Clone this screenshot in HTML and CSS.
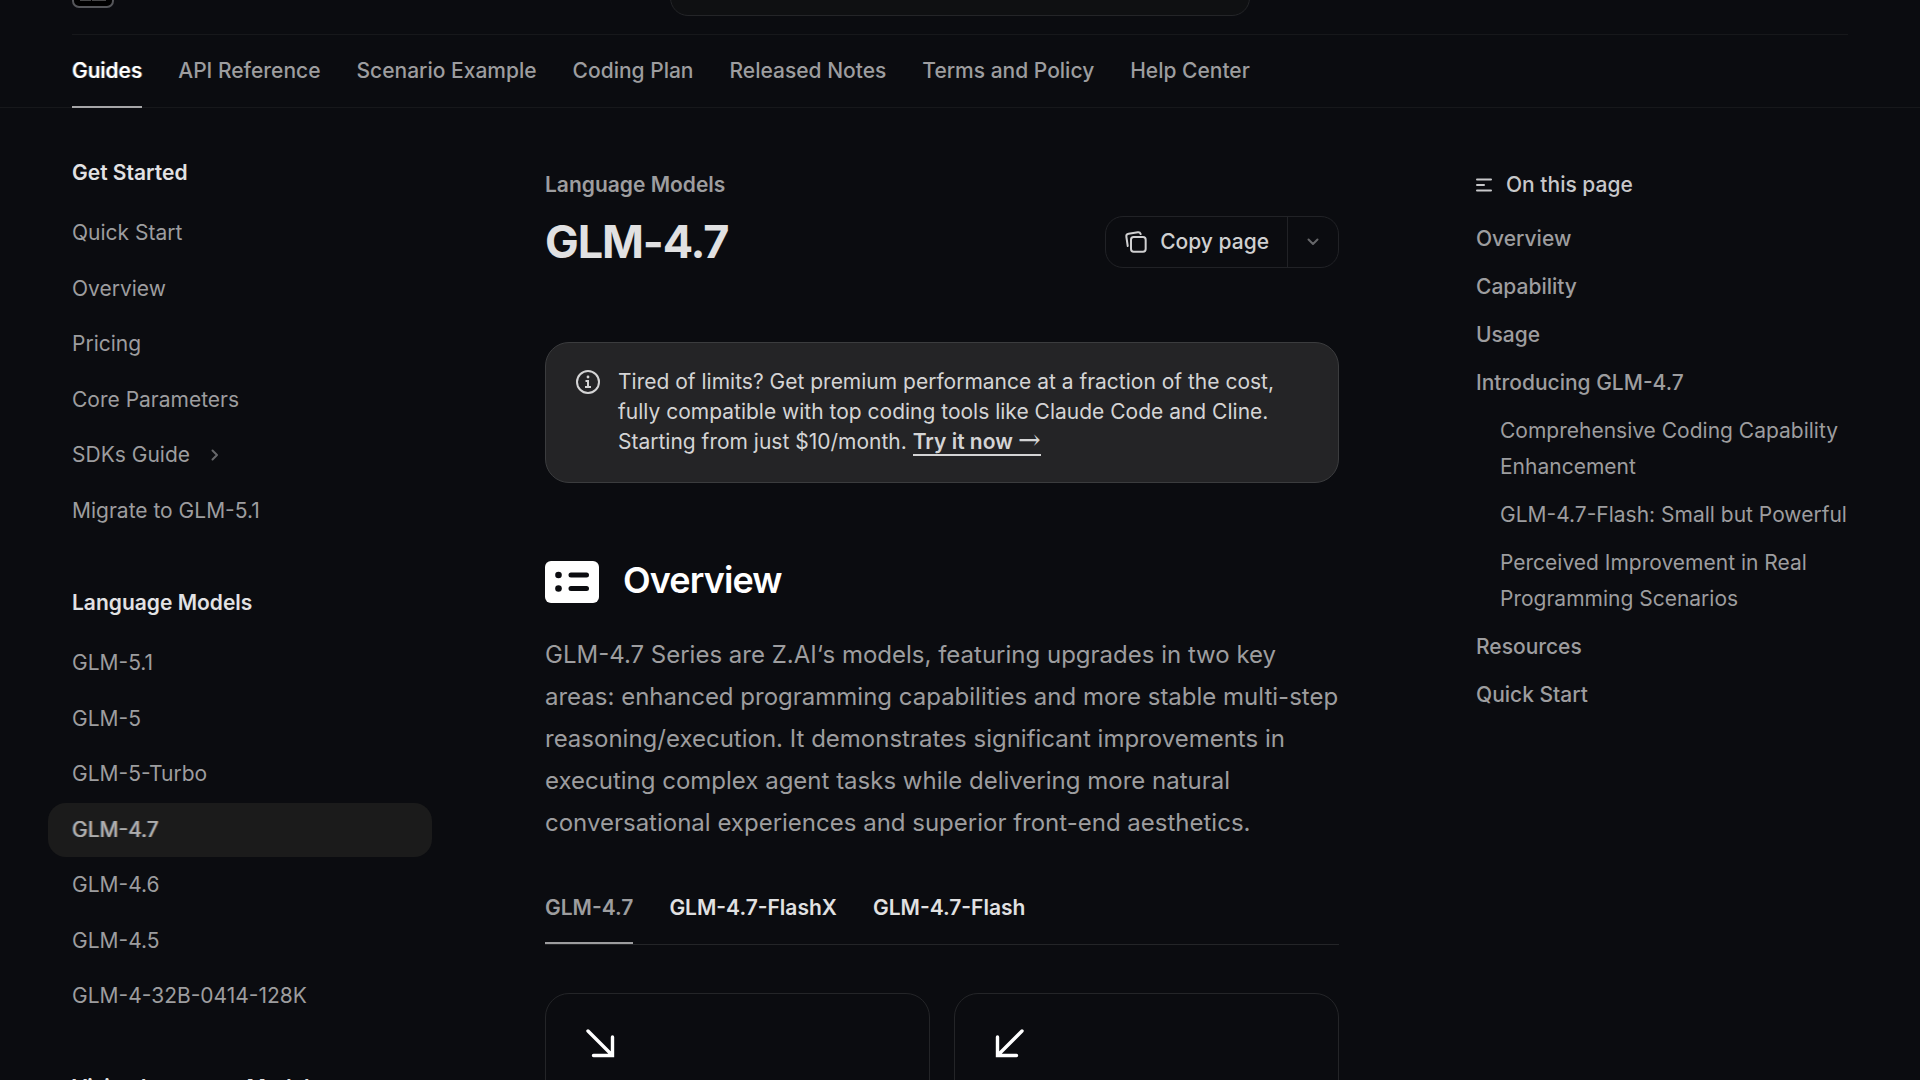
FILE: index.html
```html
<!DOCTYPE html>
<html lang="en">
<head>
<meta charset="utf-8">
<title>GLM-4.7</title>
<link rel="stylesheet" href="styles.css">
</head>
<body>
<div class="page">
  <header class="header">
    <div class="topbar">
      <a class="logo" href="#" aria-label="Home">
        <svg width="42" height="42" viewBox="0 0 42 42"><rect x="1" y="1" width="40" height="40" rx="6" fill="#000" stroke="#55565a" stroke-width="2"/><path d="M8 11h14M20 33.500h14M8 33.500h11M34 11 12 33" stroke="#8f8f92" stroke-width="2" fill="none"/></svg>
      </a>
      <button class="search" type="button" aria-label="Search"></button>
      <span></span>
    </div>
    <nav class="tabs" aria-label="Sections">
      <a class="tab tab-active" href="#">Guides</a>
      <a class="tab" href="#">API Reference</a>
      <a class="tab" href="#">Scenario Example</a>
      <a class="tab" href="#">Coding Plan</a>
      <a class="tab" href="#">Released Notes</a>
      <a class="tab" href="#">Terms and Policy</a>
      <a class="tab" href="#">Help Center</a>
    </nav>
  </header>

  <div class="layout">
    <nav class="sidebar" aria-label="Guides">
      <section class="group">
        <h2 class="group-title">Get Started</h2>
        <ul class="links">
          <li><a class="link" href="#">Quick Start</a></li>
          <li><a class="link" href="#">Overview</a></li>
          <li><a class="link" href="#">Pricing</a></li>
          <li><a class="link" href="#">Core Parameters</a></li>
          <li><a class="link" href="#">SDKs Guide
            <svg width="8" height="12" viewBox="0 0 8 12"><path d="M1.500 1.500 6 6l-4.500 4.500" fill="none" stroke="#66676a" stroke-width="2" stroke-linecap="round" stroke-linejoin="round"/></svg></a></li>
          <li><a class="link" href="#">Migrate to GLM-5.1</a></li>
        </ul>
      </section>
      <section class="group">
        <h2 class="group-title">Language Models</h2>
        <ul class="links">
          <li><a class="link" href="#">GLM-5.1</a></li>
          <li><a class="link" href="#">GLM-5</a></li>
          <li><a class="link" href="#">GLM-5-Turbo</a></li>
          <li><a class="link link-active" href="#">GLM-4.7</a></li>
          <li><a class="link" href="#">GLM-4.6</a></li>
          <li><a class="link" href="#">GLM-4.5</a></li>
          <li><a class="link" href="#">GLM-4-32B-0414-128K</a></li>
        </ul>
      </section>
      <section class="group">
        <h2 class="group-title">Vision Language Models</h2>
      </section>
    </nav>

    <main class="content">
      <div class="eyebrow">Language Models</div>
      <div class="title-row">
        <h1 class="title">GLM-4.7</h1>
        <div class="copy">
          <button class="copy-main" type="button">
            <svg width="24" height="24" viewBox="0 0 18 18" fill="none" stroke="#d0d0d1" stroke-width="1.500" stroke-linecap="round" stroke-linejoin="round"><path d="M14.250 5.250H7.250C6.145 5.250 5.250 6.145 5.250 7.250V14.250C5.250 15.355 6.145 16.250 7.250 16.250H14.250C15.355 16.250 16.250 15.355 16.250 14.250V7.250C16.250 6.145 15.355 5.250 14.250 5.250Z"/><path d="M2.801 11.998 1.772 5.074C1.610 3.981 2.364 2.964 3.456 2.802L10.380 1.773C11.313 1.634 12.190 2.164 12.528 3.001"/></svg>
            Copy page
          </button>
          <button class="copy-more" type="button" aria-label="More actions">
            <svg width="12" height="8" viewBox="0 0 12 8"><path d="M1.500 1.500 6 6l4.500-4.500" fill="none" stroke="#66676a" stroke-width="2" stroke-linecap="round" stroke-linejoin="round"/></svg>
          </button>
        </div>
      </div>

      <aside class="callout">
        <svg class="callout-icon" width="24" height="24" viewBox="0 0 24 24" fill="none" stroke="#d4d4d5" stroke-width="2"><circle cx="12" cy="12" r="11"/><path d="M9.500 11h2.500v6M9 17h6"/><circle cx="12" cy="7" r="1.400" fill="#d4d4d5" stroke="none"/></svg>
        <p class="callout-text">Tired of limits? Get premium performance at a fraction of the cost, fully compatible with top coding tools like Claude Code and Cline. Starting from just $10/month. <a class="callout-link" href="#">Try it now <span class="arrow">→</span></a></p>
      </aside>

      <h2 class="heading">
        <svg width="54" height="42" viewBox="0 0 54 42"><rect width="54" height="42" rx="6" fill="#fff"/><circle cx="13.500" cy="14" r="3.300" fill="#0b0c10"/><circle cx="13.500" cy="27.500" r="3.300" fill="#0b0c10"/><path d="M26 14h15.500M26 27.500h15.500" stroke="#0b0c10" stroke-width="5" stroke-linecap="round"/></svg>
        Overview
      </h2>
      <p class="lead">GLM-4.7 Series are Z.AI‘s models, featuring upgrades in two key areas: enhanced programming capabilities and more stable multi-step reasoning/execution. It demonstrates significant improvements in executing complex agent tasks while delivering more natural conversational experiences and superior front-end aesthetics.</p>

      <div class="models" role="tablist">
        <button class="model model-active" type="button" role="tab" aria-selected="true">GLM-4.7</button>
        <button class="model" type="button" role="tab">GLM-4.7-FlashX</button>
        <button class="model" type="button" role="tab">GLM-4.7-Flash</button>
      </div>

      <div class="cards">
        <article class="card">
          <svg width="30" height="30" viewBox="0 0 30 30" fill="none" stroke="#fff" stroke-width="3.400" stroke-linecap="round"><path d="M2 2l24 24M7.500 26.500h19V8"/></svg>
        </article>
        <article class="card">
          <svg width="30" height="30" viewBox="0 0 30 30" fill="none" stroke="#fff" stroke-width="3.400" stroke-linecap="round"><path d="M27 2 3 26M21.500 26.500h-19V8"/></svg>
        </article>
      </div>
    </main>

    <nav class="toc" aria-label="On this page">
      <div class="toc-title">
        <svg width="16" height="14" viewBox="0 0 16 14" stroke="#c8c8ca" stroke-width="2" stroke-linecap="round"><path d="M1 1.500h14M1 7h7M1 12.500h14"/></svg>
        On this page
      </div>
      <ul class="toc-list">
        <li><a class="toc-link" href="#">Overview</a></li>
        <li><a class="toc-link" href="#">Capability</a></li>
        <li><a class="toc-link" href="#">Usage</a></li>
        <li><a class="toc-link" href="#">Introducing GLM-4.7</a></li>
        <li><a class="toc-link toc-sub" href="#">Comprehensive Coding Capability Enhancement</a></li>
        <li><a class="toc-link toc-sub" href="#">GLM-4.7-Flash: Small but Powerful</a></li>
        <li><a class="toc-link toc-sub" href="#">Perceived Improvement in Real Programming Scenarios</a></li>
        <li><a class="toc-link" href="#">Resources</a></li>
        <li><a class="toc-link" href="#">Quick Start</a></li>
      </ul>
    </nav>
  </div>
</div>
</body>
</html>
```
FILE: styles.css
```css
* { box-sizing: border-box; }

body {
  margin: 0;
  background: #0b0c10;
  color: #9d9d9f;
  font-family: Inter, "Liberation Sans", sans-serif;
  font-size: 21px;
  line-height: 30px;
}

a { color: inherit; text-decoration: none; }
button { font: inherit; color: inherit; background: none; border: 0; padding: 0; }
h1, h2, p, ul { margin: 0; padding: 0; }
ul { list-style: none; }
svg { flex: none; display: block; }

.page { height: 100vh; overflow: hidden; }

/* Header, scrolled so that only its lower edge shows */
.header {
  margin-top: -61px;
  padding: 0 72px;
  border-bottom: 1px solid #17181b;
}
.topbar {
  height: 96px;
  display: grid;
  grid-template-columns: 1fr 580px 1fr;
  align-items: center;
  border-bottom: 1px solid #17181b;
}
.search {
  height: 58px;
  background: #0f1012;
  border: 1px solid #242528;
  border-radius: 18px;
}
.logo { width: 42px; }
.tabs { display: flex; gap: 36px; height: 72px; }
.tab {
  height: 73px;
  line-height: 72px;
  font-weight: 500;
  white-space: nowrap;
}
/* Bolder look without changing the width of the label */
.tab-active {
  color: #fff;
  text-shadow: -1px 0 0 rgba(255, 255, 255, 0.3), 1px 0 0 rgba(255, 255, 255, 0.3);
  border-bottom: 2px solid #a6a6a8;
}

.layout {
  display: grid;
  grid-template-columns: 360px minmax(0, 1fr) 372px;
  padding: 0 72px;
}

.sidebar { margin-left: -24px; padding-top: 50px; width: 384px; }
.group { margin-bottom: 50px; }
.group-title {
  padding-left: 24px;
  margin-bottom: 18px;
  font-size: 21px;
  font-weight: 600;
  color: #e2e2e4;
}
.links { display: grid; gap: 1px; }
.links li:nth-child(even) { margin-top: 1px; }
.link {
  display: flex;
  align-items: center;
  gap: 21px;
  height: 54px;
  padding-left: 24px;
  border-radius: 18px;
}
.link-active {
  background: #1b1b1b;
  color: #adadae;
  text-shadow: -1px 0 0 rgba(173, 173, 174, 0.4), 1px 0 0 rgba(173, 173, 174, 0.4);
}

.content { padding: 62px 138px 0 112px; padding: 62px 137px 0 113px; }
.eyebrow { font-weight: 600; }
.title-row {
  display: flex;
  justify-content: space-between;
  align-items: center;
  margin: 15px 0 73px;
}
.title { font-size: 45px; line-height: 54px; font-weight: 700; letter-spacing: -0.025em; color: #e1e1e2; }
.copy {
  display: flex;
  height: 52px;
  border: 1px solid #212226;
  border-radius: 18px;
  color: #d0d0d1;
}
.copy-main {
  display: flex;
  align-items: center;
  gap: 12px;
  padding: 0 18px;
  font-weight: 500;
}
.copy-more {
  width: 51px;
  display: grid;
  place-items: center;
  border-left: 1px solid #212226;
}

.callout {
  display: flex;
  gap: 18px;
  padding: 24px 30px 25px;
  border: 1px solid #3b3c3e;
  border-radius: 24px;
  background: #242426;
  color: #d4d4d5;
}
.callout-icon { margin-top: 3px; }
.callout-link { font-weight: 600; border-bottom: 2px solid #d4d4d5; }
.arrow { font-family: "DejaVu Serif", serif; font-size: 27px; font-weight: 400; line-height: 0; }

.heading {
  display: flex;
  align-items: flex-end;
  gap: 24px;
  margin: 74px 0 31px;
  font-size: 36px;
  line-height: 46px;
  font-weight: 600;
  letter-spacing: -0.025em;
  color: #fff;
}
.lead { font-size: 24px; line-height: 42px; }

.models {
  display: flex;
  gap: 36px;
  margin: 42px 0 48px;
  border-bottom: 1px solid #242528;
}
.model {
  height: 58px;
  padding-bottom: 13px;
  font-weight: 600;
  color: #e1e1e2;
  border-bottom: 2px solid transparent;
}
.model-active { color: #9d9d9f; border-color: #9d9d9f; }

.cards { display: grid; grid-template-columns: 1fr 1fr; gap: 24px; }
.card {
  min-height: 240px;
  padding: 35px 40px;
  border: 1px solid #242528;
  border-radius: 24px;
}

.toc { padding-top: 62px; }
.toc-title {
  display: flex;
  align-items: center;
  gap: 14px;
  font-weight: 500;
  color: #c8c8ca;
}
.toc-list { display: grid; gap: 12px; margin-top: 21px; line-height: 36px; }
.toc-link { display: block; font-weight: 500; }
.toc-sub { padding-left: 24px; font-weight: 400; }
```
